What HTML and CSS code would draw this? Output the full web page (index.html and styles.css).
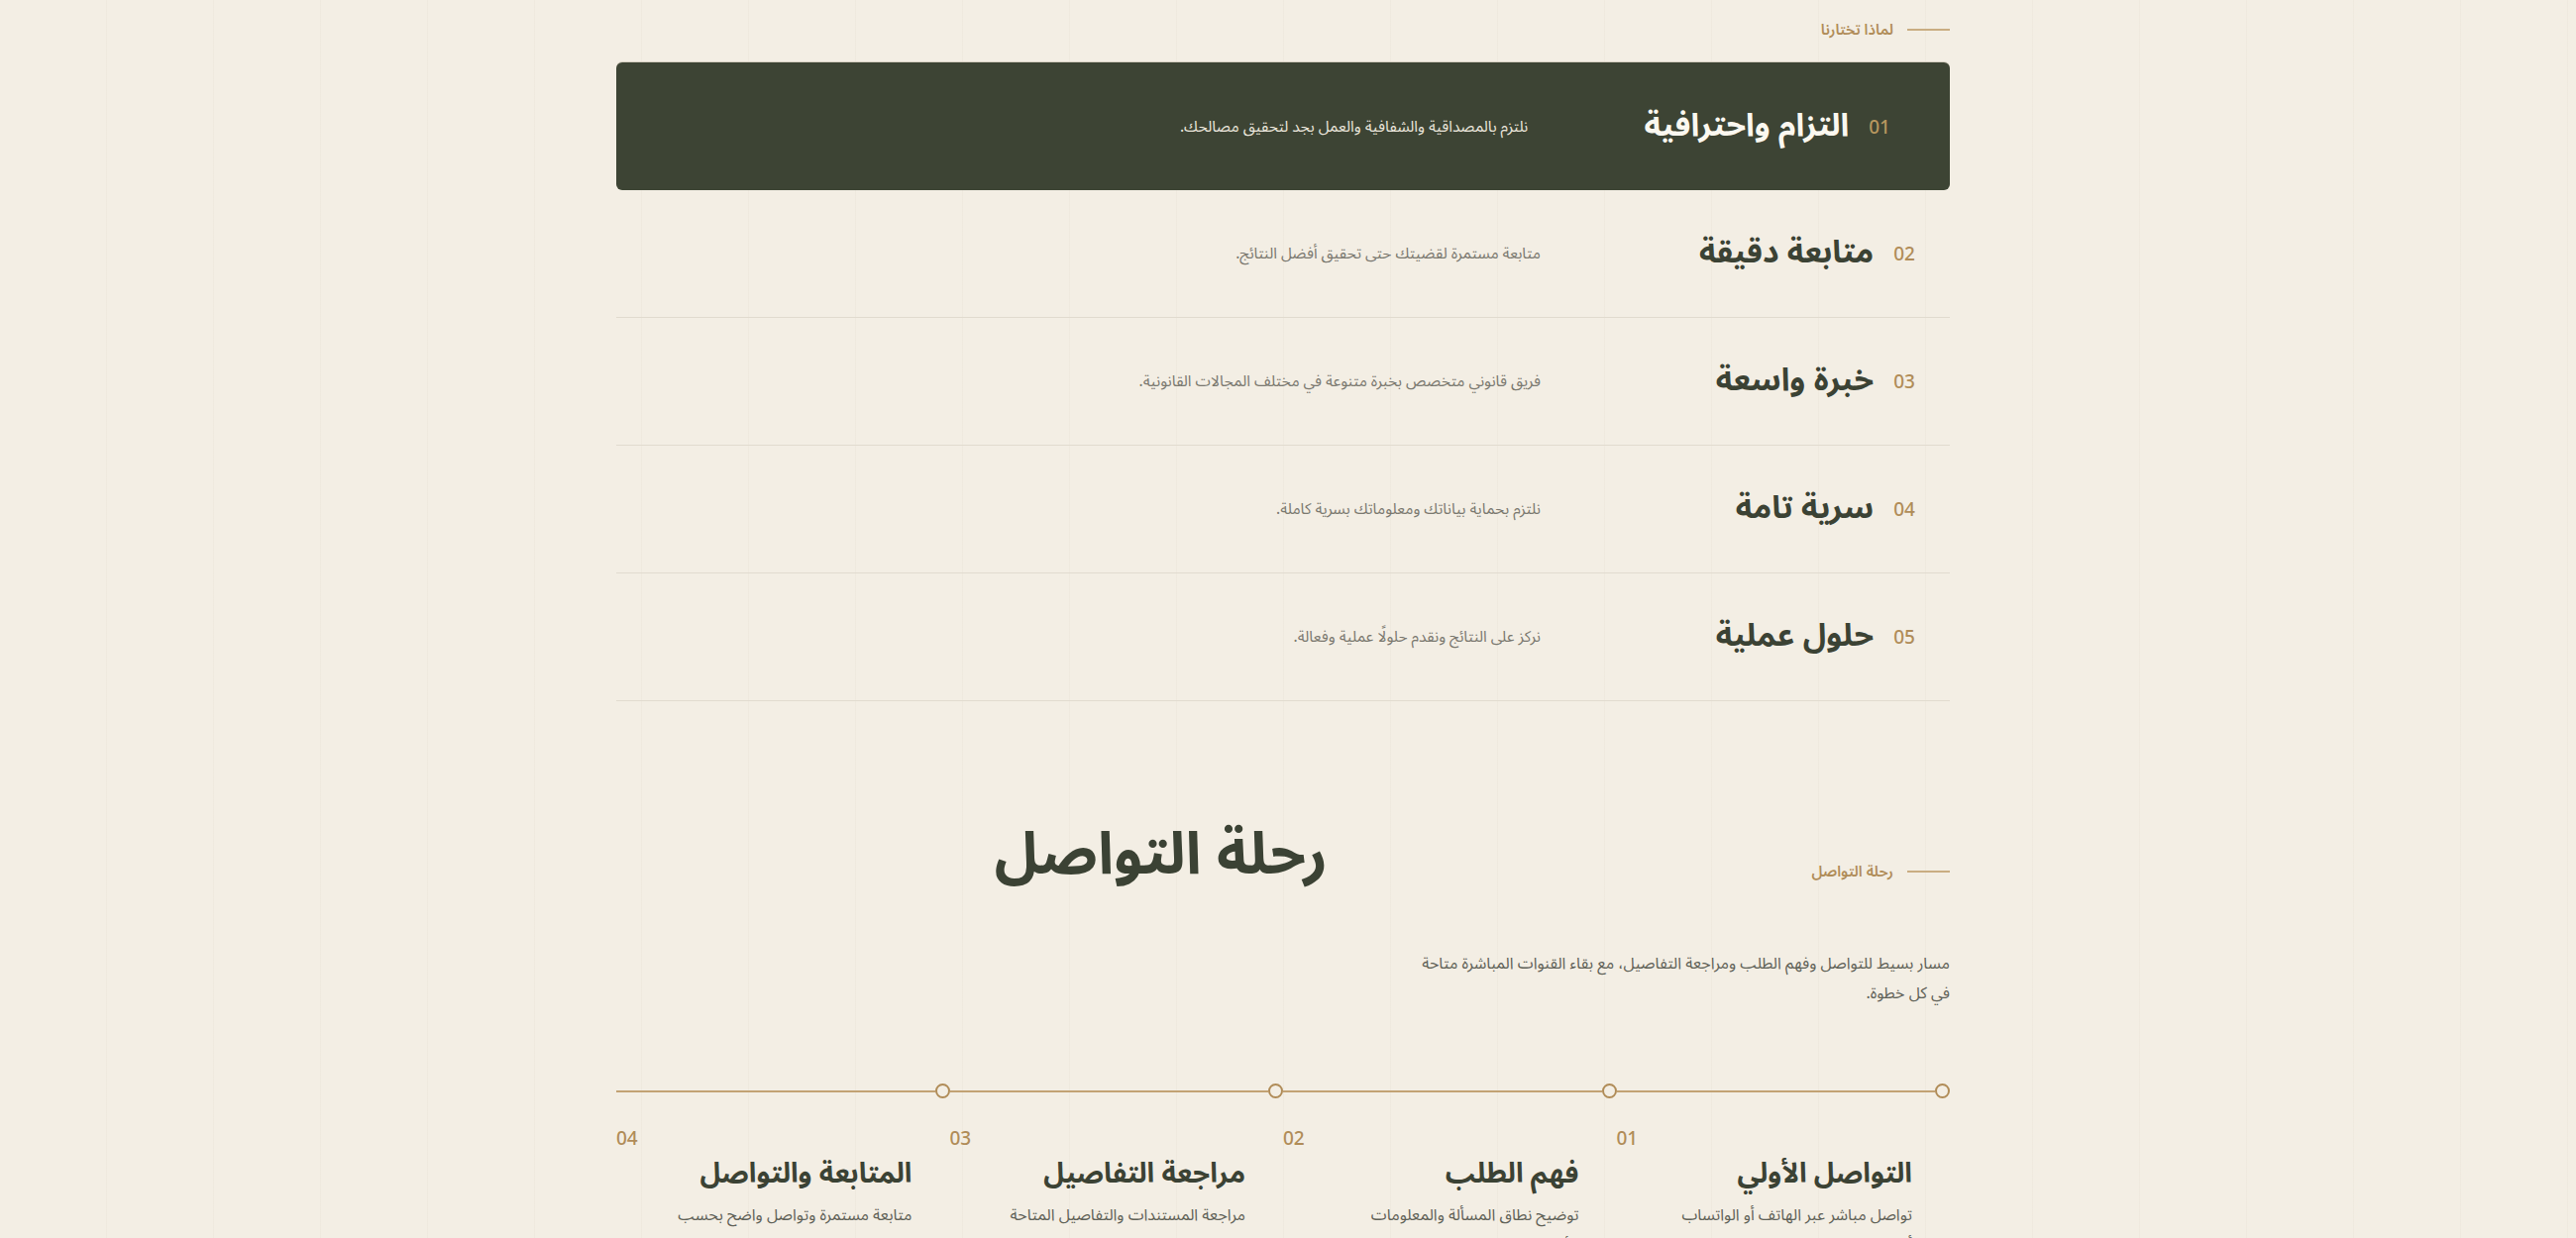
FILE: index.html
```html
<!DOCTYPE html>
<html lang="ar" dir="rtl">
<head>
<meta charset="utf-8">
<title>لماذا تختارنا</title>
<link rel="stylesheet" href="styles.css">
</head>
<body>
<main class="page">
  <section class="why">
    <div class="eyebrow"><span class="eyebrow-line"></span><span class="eyebrow-text">لماذا تختارنا</span></div>
    <ol class="reasons">
      <li class="reason is-active">
        <span class="reason-num">01</span>
        <h3 class="reason-title">التزام واحترافية</h3>
        <p class="reason-desc">نلتزم بالمصداقية والشفافية والعمل بجد لتحقيق مصالحك.</p>
      </li>
      <li class="reason">
        <span class="reason-num">02</span>
        <h3 class="reason-title">متابعة دقيقة</h3>
        <p class="reason-desc">متابعة مستمرة لقضيتك حتى تحقيق أفضل النتائج.</p>
      </li>
      <li class="reason">
        <span class="reason-num">03</span>
        <h3 class="reason-title">خبرة واسعة</h3>
        <p class="reason-desc">فريق قانوني متخصص بخبرة متنوعة في مختلف المجالات القانونية.</p>
      </li>
      <li class="reason">
        <span class="reason-num">04</span>
        <h3 class="reason-title">سرية تامة</h3>
        <p class="reason-desc">نلتزم بحماية بياناتك ومعلوماتك بسرية كاملة.</p>
      </li>
      <li class="reason">
        <span class="reason-num">05</span>
        <h3 class="reason-title">حلول عملية</h3>
        <p class="reason-desc">نركز على النتائج ونقدم حلولًا عملية وفعالة.</p>
      </li>
    </ol>
  </section>

  <section class="journey">
    <div class="journey-head">
      <div class="journey-intro">
        <div class="eyebrow"><span class="eyebrow-line"></span><span class="eyebrow-text">رحلة التواصل</span></div>
        <p class="journey-lead">مسار بسيط للتواصل وفهم الطلب ومراجعة التفاصيل، مع بقاء القنوات المباشرة متاحة في كل خطوة.</p>
      </div>
      <h2 class="journey-title">رحلة التواصل</h2>
    </div>

    <ol class="steps">
      <li class="step">
        <div class="step-track"><span class="step-dot"></span><span class="step-line"></span></div>
        <span class="step-num">01</span>
        <h3 class="step-title">التواصل الأولي</h3>
        <p class="step-desc">تواصل مباشر عبر الهاتف أو الواتساب أو البريد الإلكتروني.</p>
      </li>
      <li class="step">
        <div class="step-track"><span class="step-dot"></span><span class="step-line"></span></div>
        <span class="step-num">02</span>
        <h3 class="step-title">فهم الطلب</h3>
        <p class="step-desc">توضيح نطاق المسألة والمعلومات الأساسية المطلوبة.</p>
      </li>
      <li class="step">
        <div class="step-track"><span class="step-dot"></span><span class="step-line"></span></div>
        <span class="step-num">03</span>
        <h3 class="step-title">مراجعة التفاصيل</h3>
        <p class="step-desc">مراجعة المستندات والتفاصيل المتاحة قبل تحديد الخطوة التالية.</p>
      </li>
      <li class="step">
        <div class="step-track"><span class="step-dot"></span><span class="step-line"></span></div>
        <span class="step-num">04</span>
        <h3 class="step-title">المتابعة والتواصل</h3>
        <p class="step-desc">متابعة مستمرة وتواصل واضح بحسب طبيعة الطلب.</p>
      </li>
    </ol>
  </section>
</main>
</body>
</html>
```

FILE: styles.css
```css
* { box-sizing: border-box; }

html, body {
  margin: 0;
  padding: 0;
}

body {
  background-color: #f3eee4;
  background-image: repeating-linear-gradient(90deg, transparent 0 107px, rgba(120, 100, 70, 0.035) 107px 108px);
  font-family: "Noto Sans Arabic", "Noto Sans", "DejaVu Sans", sans-serif;
  color: #3b4234;
  height: 1250px;
  overflow: hidden;
}

.page {
  width: 1346px;
  margin: 0 auto;
  transform: translateX(-5px);
}

/* small gold label with a leading rule */
.eyebrow {
  display: flex;
  align-items: center;
  gap: 14px;
  height: 22px;
}
.eyebrow-line {
  width: 43px;
  height: 2px;
  background: #c9ad82;
}
.eyebrow-text {
  color: #b08c58;
  font-size: 15px;
  font-weight: 600;
  line-height: 22px;
}

/* ---------- why us ---------- */
.why {
  padding-top: 19px;
}
.why .eyebrow {
  margin-bottom: 22px;
}

.reasons {
  list-style: none;
  margin: 0;
  padding: 0;
}

.reason {
  display: grid;
  grid-template-columns: auto 24.8% 1fr;
  column-gap: 20px;
  align-items: center;
  height: 129px;
  padding: 0 35px;
  border-bottom: 1px solid #e1dbcf;
}

.reason-num {
  color: #b08c58;
  font-family: "Noto Sans", sans-serif;
  font-size: 19px;
  font-weight: 500;
}

.reason-title {
  margin: 0;
  font-size: 32px;
  font-weight: 700;
  line-height: 1.3;
  color: #3b4234;
}

.reason-desc {
  margin: 0;
  font-size: 15.5px;
  font-weight: 400;
  color: #7a786f;
}

.reason.is-active {
  background: #3d4434;
  border-radius: 6px;
  border-bottom: 0;
  box-shadow: 0 -1px 0 #d8d1c3;
  padding: 0 60px;
}
.reason.is-active .reason-num { color: #b8975f; }
.reason.is-active .reason-title { color: #fbf8f0; }
.reason.is-active .reason-desc { color: #ebe6dc; }

/* ---------- journey ---------- */
.journey {
  padding-top: 110px;
}

.journey-head {
  display: grid;
  grid-template-columns: 560px 1fr;
  column-gap: 68px;
  align-items: start;
}

.journey-intro .eyebrow {
  margin-top: 51px;
}

.journey-lead {
  margin: 67px 0 0;
  max-width: 545px;
  font-size: 16px;
  line-height: 30px;
  color: #5f6157;
}

.journey-title {
  margin: 0;
  padding-top: 3px;
  font-size: 59px;
  font-weight: 700;
  line-height: 86px;
  color: #3b4234;
}

.steps {
  list-style: none;
  margin: 76px 0 0;
  padding: 0;
  display: grid;
  grid-template-columns: repeat(4, 1fr);
}

.step {
  display: flex;
  flex-direction: column;
}

.step-track {
  display: flex;
  align-items: center;
  height: 15px;
}
.step-dot {
  flex: none;
  width: 15px;
  height: 15px;
  border: 2px solid #b08c58;
  border-radius: 50%;
  background: #f3eee4;
}
.step-line {
  flex: 1;
  height: 2px;
  background: #c2a274;
}

.step-num {
  align-self: flex-end;
  margin-top: 28px;
  color: #b08c58;
  font-family: "Noto Sans", sans-serif;
  font-size: 19px;
  font-weight: 500;
  line-height: 24px;
}

.step-title {
  margin: 5px 0 0;
  padding: 0 38px 0 0;
  font-size: 28px;
  font-weight: 700;
  line-height: 40px;
  color: #3b4234;
}

.step-desc {
  margin: 6px 0 0;
  padding: 0 38px 0 52px;
  font-size: 16px;
  line-height: 30px;
  color: #5f6157;
}
```
